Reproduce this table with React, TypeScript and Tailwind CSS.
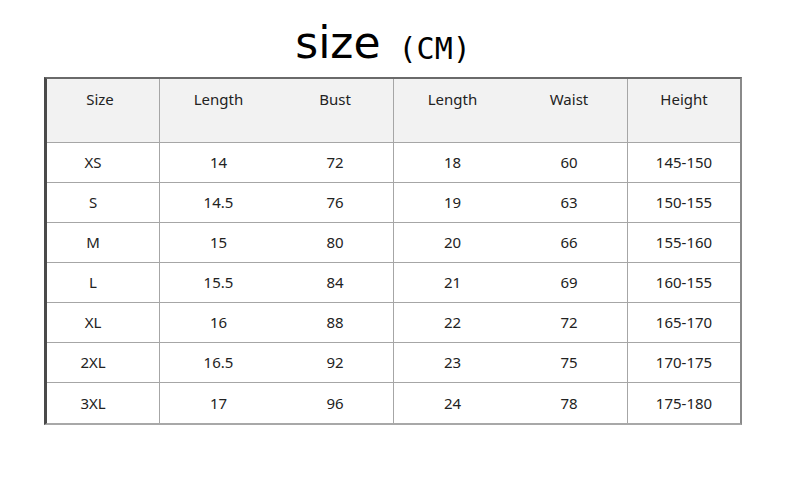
import React from "react";

const rows: string[][] = [
  ["XS", "14", "72", "18", "60", "145-150"],
  ["S", "14.5", "76", "19", "63", "150-155"],
  ["M", "15", "80", "20", "66", "155-160"],
  ["L", "15.5", "84", "21", "69", "160-155"],
  ["XL", "16", "88", "22", "72", "165-170"],
  ["2XL", "16.5", "92", "23", "75", "170-175"],
  ["3XL", "17", "96", "24", "78", "175-180"],
];

const headers = ["Size", "Length", "Bust", "Length", "Waist", "Height"];

// lines only after Size, after Bust and after Waist
const divider = (i: number) => (i === 0 || i === 2 || i === 4 ? "border-r border-[#a6a6a6]" : "");

const App: React.FC = () => {
  return (
    <div className="w-[790px] h-[486px] bg-white text-[#222]" style={{ fontFamily: '"Noto Sans", "Open Sans", sans-serif' }}>
      <div className="flex justify-center items-end h-[77px] pb-[12px] pr-[24px]">
        <span className="text-[44px] leading-none text-black" style={{ fontFamily: '"DejaVu Sans", sans-serif' }}>
          size
        </span>
        <span className="ml-[18px] mb-[1px] text-[30px] leading-none text-black" style={{ fontFamily: '"DejaVu Sans Mono", monospace' }}>
          (CM)
        </span>
      </div>
      <div className="ml-[44px] w-[698px] border-l-[3px] border-l-[#4a4a4a] border-t-2 border-t-[#6a6a6a] border-r-2 border-r-[#8a8a8a] border-b-2 border-b-[#a8a8a8]">
        <div className="grid grid-cols-[113px_117px_117px_117px_117px_112px] h-[64px] bg-[#f2f2f2] border-b border-[#a6a6a6]">
          {headers.map((h, i) => (
            <div key={i} className={`pt-[9px] text-center text-[15px] ${i === 0 ? "pr-[6px]" : ""} ${divider(i)}`}>
              {h}
            </div>
          ))}
        </div>
        {rows.map((r, ri) => (
          <div
            key={ri}
            className={`grid grid-cols-[113px_117px_117px_117px_117px_112px] h-[40px] ${ri < rows.length - 1 ? "border-b border-[#a6a6a6]" : ""}`}
          >
            {r.map((c, i) => (
              <div key={i} className={`flex items-center justify-center text-[15px] ${i === 0 ? "pr-[20px]" : ""} ${divider(i)}`}>
                {c}
              </div>
            ))}
          </div>
        ))}
      </div>
    </div>
  );
};

export default App;
